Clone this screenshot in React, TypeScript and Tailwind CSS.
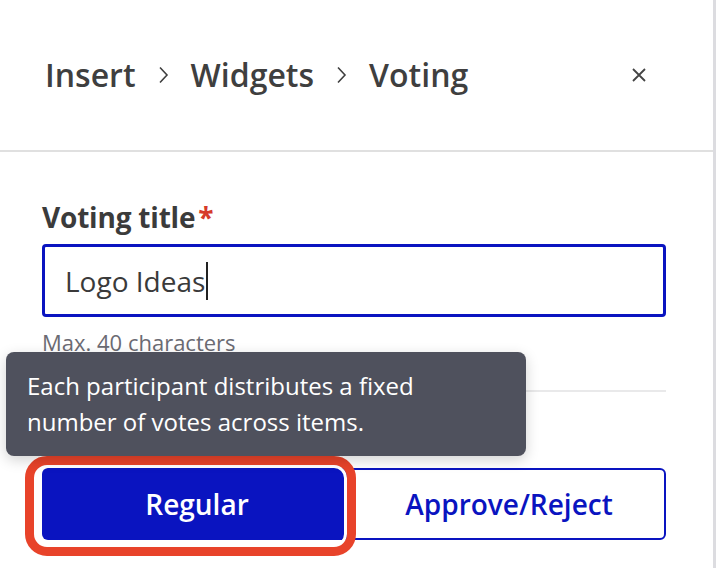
import React from "react";

export default function App() {
  return (
    <div
      className="relative w-[716px] h-[568px] overflow-hidden bg-white border-r-[3px] border-[#dcdce0]"
      style={{ fontFamily: '"Open Sans", "Noto Sans", sans-serif' }}
    >
      {/* Header */}
      <div className="h-[152px] flex items-center justify-between pl-[45px] pr-[67px] border-b-2 border-[#e0e0e0]">
        <div className="flex items-center text-[32px] font-semibold text-[#3f3f3f] leading-none">
          <span>Insert</span>
          <svg className="mx-[22px]" width="11" height="18" viewBox="0 0 11 18" fill="none">
            <path d="M2 1.5 L9 9 L2 16.5" stroke="#3f3f3f" strokeWidth="1.6" />
          </svg>
          <span>Widgets</span>
          <svg className="mx-[22px]" width="11" height="18" viewBox="0 0 11 18" fill="none">
            <path d="M2 1.5 L9 9 L2 16.5" stroke="#3f3f3f" strokeWidth="1.6" />
          </svg>
          <span>Voting</span>
        </div>
        <svg width="14" height="14" viewBox="0 0 14 14" fill="none">
          <path d="M1 1 L13 13 M13 1 L1 13" stroke="#444" strokeWidth="1.8" />
        </svg>
      </div>

      {/* Body */}
      <div className="pl-[42px] pr-[47px] pt-[47px]">
        <div className="text-[28px] leading-[36px] font-bold text-[#3b3b3b] tracking-[-0.2px]">
          Voting title<span className="text-[#d63a2a] ml-[3px]">*</span>
        </div>
        <div className="mt-[9px] h-[73px] border-[3px] border-[#0a14c0] rounded-[4px] flex items-center pl-[20px]">
          <span className="text-[28px] text-[#3a3a3a] leading-none">Logo Ideas</span>
          <span className="ml-[1px] w-[2px] h-[38px] bg-[#222]" />
        </div>
        <div className="mt-[11px] text-[22px] leading-[28px] text-[#6b6b73]">Max. 40 characters</div>
        <div className="mt-[34px] h-[2px] bg-[#e9e9ea]" />
        <div className="mt-[76px] flex h-[72px]">
          <div className="flex-1 bg-[#0a14c0] rounded-l-[6px] flex items-center justify-center text-white text-[28px] font-semibold">
            Regular
          </div>
          <div className="flex-1 border-2 border-[#0a14c0] rounded-r-[6px] flex items-center justify-center text-[#0a14c0] text-[28px] font-semibold">
            Approve/Reject
          </div>
        </div>
      </div>

      {/* Highlight ring */}
      <div className="absolute left-[25px] top-[456px] w-[331px] h-[100px] rounded-[22px] border-[9px] border-[#e8432a] shadow-[inset_0_0_0_3px_#ffffff]" />

      {/* Tooltip */}
      <div className="absolute left-[6px] top-[352px] w-[520px] h-[104px] rounded-[8px] bg-[#4f515d] shadow-[0_4px_14px_rgba(0,0,0,0.18)] pl-[21px] pt-[16px] text-white text-[24px] leading-[36px]">
        <div>Each participant distributes a fixed</div>
        <div>number of votes across items.</div>
      </div>
    </div>
  );
}
